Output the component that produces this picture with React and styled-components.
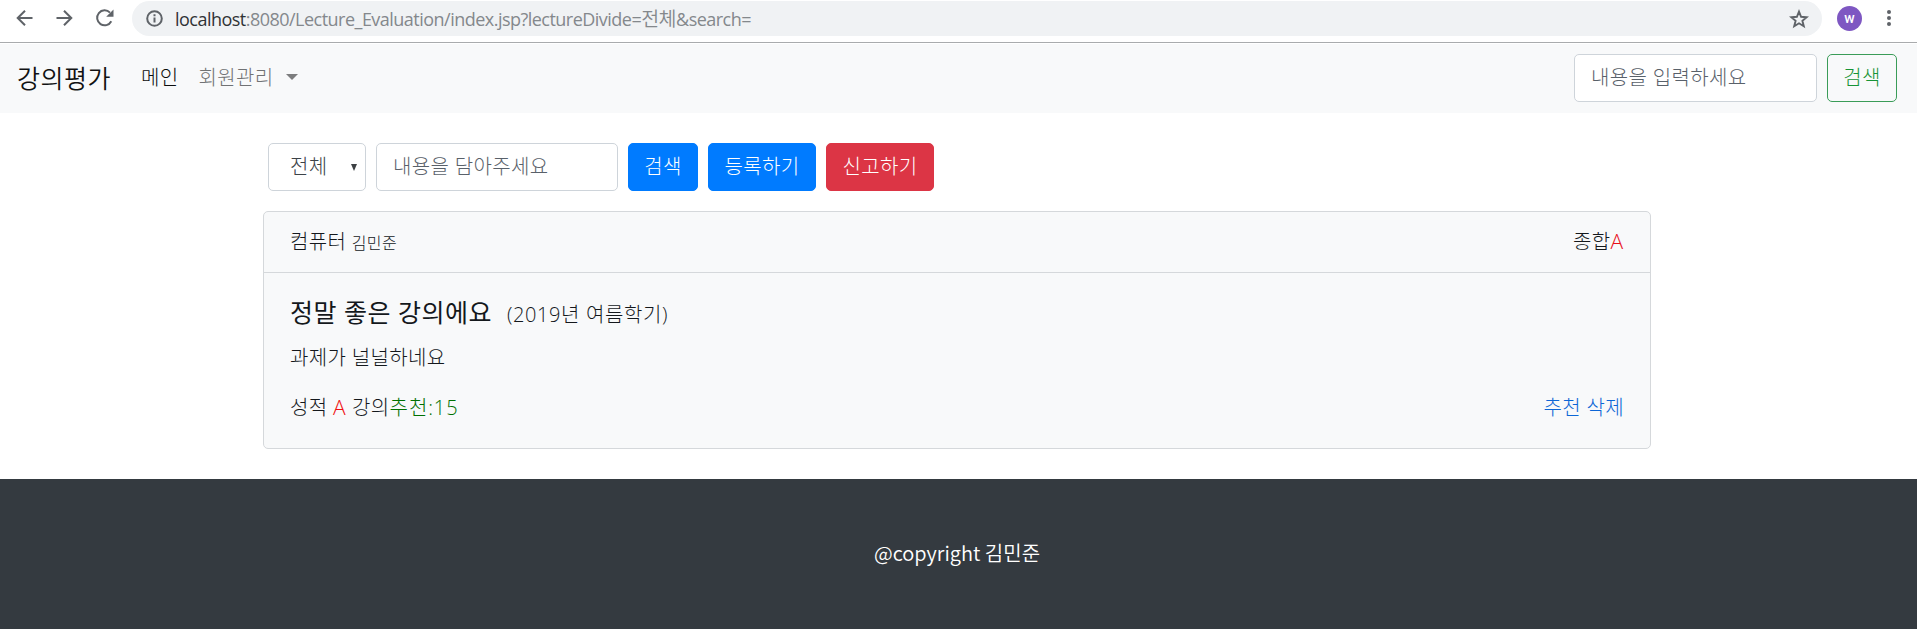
import React from 'react';
import styled, { createGlobalStyle } from 'styled-components';

const Global = createGlobalStyle`
  * { box-sizing: border-box; }
  body {
    margin: 0;
    background: #fff;
    color: #14181c;
    font: 300 20px/30px 'Open Sans', 'Noto Sans CJK KR', sans-serif;
    letter-spacing: 0.35px;
    overflow: hidden;
  }
  input, button, select { font: inherit; letter-spacing: inherit; margin: 0; }
`;

const Browser = styled.div`
  display: flex;
  align-items: center;
  height: 43px;
  padding: 0 16px 6px 14px;
  border-bottom: 1px solid #a9abad;
`;
const Icon = styled.svg`
  display: block;
  flex: none;
  margin-right: ${p => p.$gap || 0}px;
`;
const Address = styled.div`
  flex: 1;
  display: flex;
  align-items: center;
  height: 35px;
  margin-top: 1px;
  padding: 0 13px 0 14px;
  border-radius: 18px;
  background: #f0f2f4;
`;
const Url = styled.span`
  flex: 1;
  padding-bottom: 1px;
  font: 400 18px/26px 'Open Sans', 'Noto Sans CJK KR', sans-serif;
  letter-spacing: -0.52px;
  color: #84888c;
  white-space: nowrap;
  b { font-weight: 400; color: #303336; }
  i { font: 350 19.5px/26px 'Noto Sans CJK KR', sans-serif; }
`;
const Avatar = styled.span`
  width: 25px;
  height: 25px;
  margin: 0 15px 0 15px;
  border-radius: 50%;
  background: #7e57c2;
  color: #fff;
  font: 500 14px/24px Roboto, sans-serif;
  text-align: center;
`;

const Navbar = styled.nav`
  display: flex;
  align-items: center;
  height: 70px;
  padding: 0 20px 2px 17px;
  background: #f8f9fa;
  border-top: 1px solid #fff;
`;
const Brand = styled.a`
  font-size: 25px;
  font-weight: 350;
  color: #111213;
  margin-right: 30px;
  letter-spacing: 0.5px;
`;
const NavLink = styled.a`
  display: flex;
  align-items: center;
  color: ${p => (p.$active ? '#0c0d0d' : '#707274')};
  margin-right: 20px;
`;
const Caret = styled.span`
  margin-left: 12px;
  border: 6px solid transparent;
  border-top-color: #7c7d7e;
  border-bottom: 0;
  transform: translateY(-1px);
`;
const Spacer = styled.div`flex: 1;`;

const TextInput = styled.input`
  width: ${p => p.$w}px;
  height: 48px;
  padding: 0 16px 1px;
  border: 1px solid #ced4da;
  border-radius: 5px;
  background: #fff;
  outline: 0;
  &::placeholder { color: #59616a; opacity: 1; }
`;
const tones = {
  primary: ['#007bff', '#fff', '#007bff'],
  danger: ['#dc3545', '#fff', '#dc3545'],
  outline: ['transparent', '#169436', '#3a9c58'],
};
const Button = styled.button`
  width: ${p => p.$w}px;
  height: 48px;
  padding: 0;
  border-radius: 5px;
  border: 1px solid ${p => tones[p.$tone][2]};
  background: ${p => tones[p.$tone][0]};
  color: ${p => tones[p.$tone][1]};
  text-align: center;
`;
const Row = styled.div`
  display: flex;
  align-items: center;
  gap: ${p => p.$gap || 0}px;
`;

const Container = styled.main`
  width: 1388px;
  margin-left: 263px;
  padding-top: 30px;
`;
const Filters = styled(Row)`padding-left: 5px;`;
const Select = styled.div`
  display: flex;
  align-items: center;
  justify-content: space-between;
  width: 98px;
  height: 48px;
  padding: 0 8px 0 21px;
  border: 1px solid #ced4da;
  border-radius: 5px;
  color: #3c4248;
`;
const Arrow = styled.span`
  border: 3.5px solid transparent;
  border-top: 7px solid #3c4043;
  border-bottom: 0;
`;

const Card = styled.section`
  margin-top: 20px;
  height: 238px;
  border: 1px solid #d5d8db;
  border-radius: 5px;
  background: #f8f9fa;
`;
const Between = styled.div`
  display: flex;
  justify-content: space-between;
`;
const CardHeader = styled(Between)`
  height: 61px;
  padding: 15px 26px;
  border-bottom: 1px solid #d5d8db;
`;
const CardBody = styled.div`padding: 24px 26px;`;
const Small = styled.small`font-size: 16px;`;
const Title = styled.h5`
  margin: 0 0 13px;
  font-size: 25px;
  line-height: 30px;
  font-weight: 400;
  letter-spacing: 0.5px;
  small { font-size: 20px; font-weight: 300; margin-left: 8px; letter-spacing: 0.6px; }
`;
const Text = styled.p`margin: 0 0 20px;`;
const Colored = styled.span`
  color: ${p => p.$c};
  letter-spacing: 0.9px;
`;
const Grade = styled(Colored)`
  font-size: 21px;
  line-height: 1;
`;
const Link = styled.a`color: #0c66d6;`;

const Footer = styled.footer`
  display: flex;
  justify-content: center;
  height: 150px;
  margin-top: 30px;
  padding: 59px 3px 0 0;
  background: #343a40;
  color: #fff;
  font-family: 'Noto Sans CJK KR', sans-serif;
  font-weight: 350;
  letter-spacing: 0;
`;

export default function App() {
  return (
    <>
      <Global />
      <Browser>
        <Icon width="22" height="22" viewBox="0 0 22 22" $gap={18} fill="none" stroke="#5f6368" strokeWidth="2">
          <path d="M18.500 11H4M11 3.700L3.700 11l7.300 7.300" />
        </Icon>
        <Icon width="22" height="22" viewBox="0 0 22 22" $gap={18} fill="none" stroke="#5f6368" strokeWidth="2">
          <path d="M2.500 11H17M10 3.700l7.300 7.300-7.300 7.300" />
        </Icon>
        <Icon width="22" height="22" viewBox="0 0 22 22" $gap={16} fill="none" stroke="#5f6368" strokeWidth="2">
          <path d="M17.300 14.300A7.500 7.500 0 1 1 16 5.600" />
          <path d="M19.500 2.500v7.300h-7.300z" fill="#5f6368" stroke="none" />
        </Icon>
        <Address>
          <Icon width="17" height="17" viewBox="0 0 17 17" $gap={12} fill="none" stroke="#5f6368" strokeWidth="2">
            <circle cx="8.500" cy="8.500" r="7.300" />
            <path d="M8.500 7.500v5M8.500 4.300v2" />
          </Icon>
          <Url>
            <b>localhost</b>:8080/Lecture_Evaluation/index.jsp?lectureDivide=<i>전체</i>&amp;search=
          </Url>
          <Icon width="20" height="20" viewBox="0 0 20 20" fill="none" stroke="#5f6368" strokeWidth="1.900">
            <path d="M10 2.600l2.100 5.200 5.600.4-4.300 3.600 1.400 5.500L10 14.300l-4.800 3 1.400-5.500L2.300 8.200l5.600-.4z" />
          </Icon>
        </Address>
        <Avatar>w</Avatar>
        <Icon width="24" height="20" viewBox="0 0 24 20" fill="#5f6368">
          <circle cx="12" cy="4" r="2" /><circle cx="12" cy="10" r="2" /><circle cx="12" cy="16" r="2" />
        </Icon>
      </Browser>
      <Navbar>
        <Brand>강의평가</Brand>
        <NavLink $active>메인</NavLink>
        <NavLink>회원관리<Caret /></NavLink>
        <Spacer />
        <Row $gap={10}>
          <TextInput $w={243} placeholder="내용을 입력하세요" />
          <Button $tone="outline" $w={70}>검색</Button>
        </Row>
      </Navbar>
      <Container>
        <Filters $gap={10}>
          <Select>전체<Arrow /></Select>
          <TextInput $w={242} placeholder="내용을 담아주세요" />
          <Button $tone="primary" $w={70}>검색</Button>
          <Button $tone="primary" $w={108}>등록하기</Button>
          <Button $tone="danger" $w={108}>신고하기</Button>
        </Filters>
        <Card>
          <CardHeader>
            <span>컴퓨터 <Small>김민준</Small></span>
            <span>종합<Grade $c="#e8101a">A</Grade></span>
          </CardHeader>
          <CardBody>
            <Title>정말 좋은 강의에요 <small>(2019년 여름학기)</small></Title>
            <Text>과제가 널널하네요</Text>
            <Between>
              <span>성적 <Grade $c="#f01010">A</Grade> 강의<Colored $c="#007000">추천:15</Colored></span>
              <Link>추천 삭제</Link>
            </Between>
          </CardBody>
        </Card>
      </Container>
      <Footer><span>@copyright 김민준</span></Footer>
    </>
  );
}
